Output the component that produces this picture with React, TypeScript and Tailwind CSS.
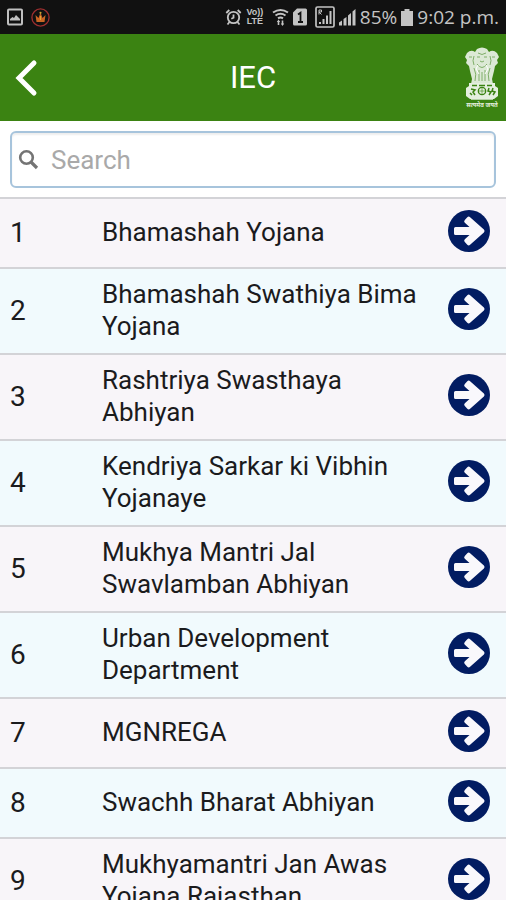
import { useState } from "react";

interface Scheme {
  id: number;
  name: string;
}

const schemes: Scheme[] = [
  { id: 1, name: "Bhamashah Yojana" },
  { id: 2, name: "Bhamashah Swathiya Bima Yojana" },
  { id: 3, name: "Rashtriya Swasthaya Abhiyan" },
  { id: 4, name: "Kendriya Sarkar ki Vibhin Yojanaye" },
  { id: 5, name: "Mukhya Mantri Jal Swavlamban Abhiyan" },
  { id: 6, name: "Urban Development Department" },
  { id: 7, name: "MGNREGA" },
  { id: 8, name: "Swachh Bharat Abhiyan" },
  { id: 9, name: "Mukhyamantri Jan Awas Yojana Rajasthan" },
];

function StatusBar() {
  return (
    <div className="flex h-[34px] shrink-0 items-center justify-between bg-[#111111] px-[7px] text-[#c4c4c4]">
      <div className="flex items-center gap-2">
        <svg width="16" height="18" viewBox="0 0 16 18" fill="none">
          <rect x="1" y="1.5" width="14" height="15" rx="1" stroke="#c0c0c0" strokeWidth="2" />
          <path d="M3 12.5V11l2.5-2L7 10l2-3 4 4v1.5z" fill="#c0c0c0" />
        </svg>
        <svg width="19" height="19" viewBox="0 0 19 19" fill="none">
          <circle cx="9.5" cy="9.5" r="8.6" stroke="#a02f30" strokeWidth="1.3" />
          <path d="M4.5 7l3 3 2-5.5 2 5.5 3-3-1 7h-8z" fill="#c96524" />
          <circle cx="9.5" cy="4.8" r="1.1" fill="#c9a030" />
          <path d="M9.5 8v4" stroke="#e0a537" />
        </svg>
      </div>

      <div className="flex items-center">
        <svg width="17" height="18" viewBox="0 0 17 18" fill="none" stroke="currentColor" strokeWidth="1.8">
          <circle cx="8.5" cy="9.5" r="5.7" />
          <path d="M8.5 6.5v3.2l-2.2 1M1.3 5l3-3M15.7 5l-3-3M4.5 14l-2 2.5M12.5 14l2 2.500" />
        </svg>
        <div className="ml-1 w-[18px] text-center font-['Liberation_Sans',sans-serif] text-[9px] leading-[9px] font-bold">
          <div>Vo))</div>
          <div>LTE</div>
        </div>
        <svg className="ml-2" width="17" height="18" viewBox="0 0 17 18" fill="none" stroke="currentColor" strokeWidth="2">
          <path d="M1 4.500q7.500-5 15 0M3.500 7.500q5-3.300 10 0M6 10.300q2.500-1.700 5 0" />
          <path d="M6.500 17v-4M10.500 12.500v4" strokeWidth="1.600" />
          <path d="M4.800 14l1.700-2.500L8.200 14zM8.800 15.500l1.700 2.500 1.700-2.500z" fill="currentColor" stroke="none" />
        </svg>
        <svg className="ml-1" width="14" height="18" viewBox="0 0 14 18">
          <path d="M4 0.500h8.500a1.500 1.500 0 0 1 1.500 1.500v14a1.500 1.500 0 0 1-1.500 1.500h-11A1.500 1.500 0 0 1 0 16V4.500z" fill="currentColor" />
          <path d="M5 6.500L7.500 4.800V14M5 14h5" fill="none" stroke="#111111" strokeWidth="1.800" />
        </svg>
        <svg className="ml-2" width="20" height="22" viewBox="0 0 20 22">
          <rect x="1" y="1" width="18" height="20" rx="1.500" fill="none" stroke="currentColor" strokeWidth="1.700" />
          <path d="M4 18v-2h2v2zM7.500 18v-5h2v5zM11 18V9.500h2V18zM14.500 18V5h2v13z" fill="currentColor" />
          <path d="M4 8.500V4h2.500v2H4l2.500 2.500" fill="none" stroke="currentColor" />
        </svg>
        <svg className="ml-1" width="17" height="18" viewBox="0 0 17 18" fill="currentColor">
          <path d="M0 17.500v-3l3-2v5zM4.500 17.500V11L7.500 9v8.500zM9 17.500V7.500l3-2.500v12.500zM13.500 17.500V3.500l3-2.500v16.500z" />
        </svg>
        <span className="ml-1 font-['Open_Sans',sans-serif] text-[19px] leading-6">85%</span>
        <svg className="ml-1" width="12" height="17" viewBox="0 0 12 17" fill="currentColor">
          <path d="M3.500 0h5v2H12v15H0V2h3.500z" />
        </svg>
        <span className="ml-1 font-['Open_Sans',sans-serif] text-[19px] leading-6">9:02 p.m.</span>
      </div>
    </div>
  );
}

function Emblem() {
  return (
    <svg width="36" height="62" viewBox="0 0 36 62" fill="none" role="img" aria-label="State Emblem of India">
      {/* lions */}
      <path
        d="M13 2q5-3 10 0l2 3q4-3 8 1l2 4-2 3 1 3-3 3-1 5-2 8 1 5H7l1-5-2-8-1-5-3-3 1-3-2-3 2-4q4-4 8-1z"
        fill="#dce9d5"
      />
      <path
        d="M14 6q4 3 8 0M13 10h3M20 10h3M16 14q2 2 4 0M10 9q-2 5 0 9M26 9q2 5 0 9M5 10h3M28 10h3M13 17q5 7 10 0M10 21q3 6 1 13M26 21q-3 6-1 13M15 23v11M21 23v11M18 25v9"
        stroke="#7fae68"
        strokeWidth="1"
      />
      <path d="M14 18l-2 4 3 5M22 18l2 4-3 5" stroke="#ffffff" strokeWidth="1" />
      {/* abacus with the wheel */}
      <path d="M5 36h26v3l3 2v8l-4 3H6l-4-3v-8l3-2z" fill="#e5efdf" />
      <circle cx="18" cy="44" r="3.700" stroke="#3b8312" strokeWidth="1.300" />
      <path d="M18 41v6M15 44h6" stroke="#3b8312" strokeWidth="0.600" />
      <path
        d="M7 42l4 1-2 2 2 3M6 46l2 2M25 41l-1 3 3 1-2 3M29 41l-1 3 3 1-2 3M8 38.500h5M15 38.500h6M23 38.500h5"
        stroke="#3b8312"
        strokeWidth="1.500"
      />
      <path d="M7 52.500h22" stroke="#b5d0a6" />
      {/* motto */}
      <text
        x="18"
        y="60"
        textAnchor="middle"
        fontSize="6"
        fontWeight="700"
        fill="#e5efdf"
        fontFamily="'Noto Sans', 'Noto Sans Devanagari', sans-serif"
      >
        सत्यमेव जयते
      </text>
    </svg>
  );
}

function ArrowIcon() {
  return (
    <svg width="42" height="42" viewBox="0 0 42 42">
      <circle cx="21" cy="21" r="21" fill="#021c62" />
      <path
        d="M7.500 17h14l-4.700-4.200a2 2 0 0 1 0-2.800l2.500-2.800a2 2 0 0 1 2.800 0l13.800 12.400a2 2 0 0 1 0 2.800L22.100 34.800a2 2 0 0 1-2.800 0l-2.500-2.800a2 2 0 0 1 0-2.800l4.700-4.200h-14a1.500 1.500 0 0 1-1.500-1.500v-5A1.500 1.500 0 0 1 7.500 17z"
        fill="#f9f8fc"
      />
    </svg>
  );
}

export default function App() {
  const [query, setQuery] = useState("");

  const visible = schemes.filter((s) => s.name.toLowerCase().includes(query.toLowerCase()));

  return (
    <div className="flex h-screen flex-col overflow-hidden bg-white font-[Roboto,sans-serif] text-[#1b1b1d]">
      <StatusBar />

      <header className="grid shrink-0 grid-cols-[1fr_auto_1fr] items-center bg-[#3b8312] px-[6px] pt-[13px] pb-3">
        <button type="button" aria-label="Back" className="justify-self-start pl-2">
          <svg width="24" height="38" viewBox="0 0 24 38" fill="none">
            <path d="M20 4L5 19l15 15" stroke="#ffffff" strokeWidth="5" strokeLinecap="round" />
          </svg>
        </button>
        <h1 className="text-[31px] leading-10 text-white">IEC</h1>
        <div className="justify-self-end">
          <Emblem />
        </div>
      </header>

      <div className="shrink-0 px-[10px] pt-[10px] pb-[9px]">
        <label className="flex h-[57px] items-center gap-3 rounded-md border-2 border-[#a7c4dc] px-[6px] shadow-[inset_0_2px_2px_#eeeeee]">
          <svg className="shrink-0" width="21" height="21" viewBox="0 0 21 21" fill="none" stroke="#747474">
            <circle cx="8.500" cy="8.500" r="6.300" strokeWidth="2.600" />
            <path d="M13 13l6 6" strokeWidth="3.200" />
          </svg>
          <input
            type="text"
            aria-label="Search"
            placeholder="Search"
            value={query}
            onChange={(e) => setQuery(e.target.value)}
            className="w-full min-w-0 bg-transparent text-[26px] leading-8 outline-none placeholder:text-[#a9a9a9]"
          />
        </label>
      </div>

      <ul className="min-h-0 flex-1 overflow-y-auto [scrollbar-width:none]">
        {visible.map((scheme) => (
          <li
            key={scheme.id}
            className="flex min-h-[70px] items-center border-t-2 border-[#d3d3d7] pt-[9px] pr-4 pb-[11px] pl-[10px] odd:bg-[#f8f5f9] even:bg-[#f1fafd]"
          >
            <span className="w-[92px] shrink-0 pt-[2px] text-[28px] leading-8">{scheme.id}</span>
            <span className="flex-1 pr-6 text-[26px] leading-8">{scheme.name}</span>
            <button type="button" aria-label={`Open ${scheme.name}`} className="shrink-0 pb-[2px]">
              <ArrowIcon />
            </button>
          </li>
        ))}
      </ul>
    </div>
  );
}
